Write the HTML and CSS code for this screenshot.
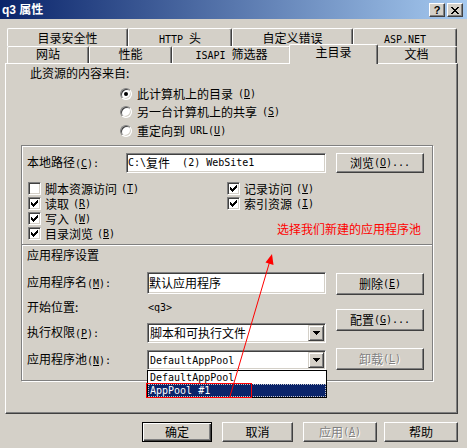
FILE: index.html
```html
<!DOCTYPE html>
<html>
<head>
<meta charset="utf-8">
<title>q3 属性</title>
<link rel="stylesheet" href="styles.css">
</head>
<body>
<div class="win">
  <div class="title">
    <span class="title-text">q3 属性</span>
    <div class="caps">
      <span class="cap cap-help">?</span>
      <span class="cap"><svg width="8" height="7" viewBox="0 0 8 7"><path d="M0 0h2v1h-2zM6 0h2v1h-2zM1 1h2v1h-2zM5 1h2v1h-2zM2 2h4v1h-4zM3 3h2v1h-2zM2 4h4v1h-4zM1 5h2v1h-2zM5 5h2v1h-2zM0 6h2v1h-2zM6 6h2v1h-2z" fill="#000"/></svg></span>
    </div>
  </div>

  <div class="tabs">
    <div class="tabrow back">
      <div class="tab t121">目录安全性</div>
      <div class="tab t104"><span class="m">HTTP </span>头</div>
      <div class="tab t121">自定义错误</div>
      <div class="tab t104"><span class="m">ASP.NET</span></div>
    </div>
    <div class="tabrow front">
      <div class="tab t82">网站</div>
      <div class="tab t83">性能</div>
      <div class="tab t119"><span class="m">ISAPI </span>筛选器</div>
      <div class="tab t85 active">主目录</div>
      <div class="tab t81">文档</div>
    </div>
  </div>

  <div class="panel">
    <div class="src">此资源的内容来自:</div>
    <div class="radios">
      <div class="radio"><span class="rb on"></span>此计算机上的目录<span class="m">(<u>D</u>)</span></div>
      <div class="radio"><span class="rb"></span>另一台计算机上的共享<span class="m">(<u>S</u>)</span></div>
      <div class="radio"><span class="rb"></span>重定向到 <span class="m">URL(<u>U</u>)</span></div>
    </div>

    <div class="group">
      <div class="pathrow">
        <div class="lbl lbl-path">本地路径<span class="m">(<u>C</u>):</span></div>
        <div class="edit edit-path"><span class="m">C:\</span>复件<span class="m">&nbsp;&nbsp;(2) WebSite1</span></div>
        <div class="btn btn-side">浏览<span class="m">(<u>O</u>)...</span></div>
      </div>

      <div class="checks">
        <div class="chk"><span class="cb"></span>脚本资源访问<span class="m">(<u>T</u>)</span></div>
        <div class="chk"><span class="cb"><svg width="7" height="7" viewBox="0 0 7 7"><path d="M6 0h1v1h-1zM5 1h2v1h-2zM0 2h1v1h-1zM4 2h3v1h-3zM0 3h2v1h-2zM3 3h3v1h-3zM0 4h5v1h-5zM1 5h3v1h-3zM2 6h1v1h-1z" fill="#000"/></svg></span>记录访问<span class="m">(<u>V</u>)</span></div>
        <div class="chk"><span class="cb"><svg width="7" height="7" viewBox="0 0 7 7"><path d="M6 0h1v1h-1zM5 1h2v1h-2zM0 2h1v1h-1zM4 2h3v1h-3zM0 3h2v1h-2zM3 3h3v1h-3zM0 4h5v1h-5zM1 5h3v1h-3zM2 6h1v1h-1z" fill="#000"/></svg></span>读取<span class="m">(<u>R</u>)</span></div>
        <div class="chk"><span class="cb"><svg width="7" height="7" viewBox="0 0 7 7"><path d="M6 0h1v1h-1zM5 1h2v1h-2zM0 2h1v1h-1zM4 2h3v1h-3zM0 3h2v1h-2zM3 3h3v1h-3zM0 4h5v1h-5zM1 5h3v1h-3zM2 6h1v1h-1z" fill="#000"/></svg></span>索引资源<span class="m">(<u>I</u>)</span></div>
        <div class="chk"><span class="cb"><svg width="7" height="7" viewBox="0 0 7 7"><path d="M6 0h1v1h-1zM5 1h2v1h-2zM0 2h1v1h-1zM4 2h3v1h-3zM0 3h2v1h-2zM3 3h3v1h-3zM0 4h5v1h-5zM1 5h3v1h-3zM2 6h1v1h-1z" fill="#000"/></svg></span>写入<span class="m">(<u>W</u>)</span></div>
        <div class="chk"><span class="cb"><svg width="7" height="7" viewBox="0 0 7 7"><path d="M6 0h1v1h-1zM5 1h2v1h-2zM0 2h1v1h-1zM4 2h3v1h-3zM0 3h2v1h-2zM3 3h3v1h-3zM0 4h5v1h-5zM1 5h3v1h-3zM2 6h1v1h-1z" fill="#000"/></svg></span>目录浏览<span class="m">(<u>B</u>)</span></div>
        <div class="note">选择我们新建的应用程序池</div>
      </div>

      <div class="sep"></div>
      <div class="sub">应用程序设置</div>

      <div class="app">
        <div class="appgrid">
          <div class="lbl">应用程序名<span class="m">(<u>M</u>):</span></div>
          <div class="edit edit-app">默认应用程序</div>

          <div class="lbl">开始位置:</div>
          <div class="plain"><span class="m">&lt;q3&gt;</span></div>

          <div class="lbl">执行权限<span class="m">(<u>P</u>):</span></div>
          <div class="combo">
            <span class="val">脚本和可执行文件</span>
            <span class="dd"><svg width="7" height="4" viewBox="0 0 7 4"><path d="M0 0h7v1h-7zM1 1h5v1h-5zM2 2h3v1h-3zM3 3h1v1h-1z" fill="#000"/></svg></span>
          </div>

          <div class="lbl">应用程序池<span class="m">(<u>N</u>):</span></div>
          <div class="combo">
            <span class="val"><span class="m">DefaultAppPool</span></span>
            <span class="dd"><svg width="7" height="4" viewBox="0 0 7 4"><path d="M0 0h7v1h-7zM1 1h5v1h-5zM2 2h3v1h-3zM3 3h1v1h-1z" fill="#000"/></svg></span>
            <div class="ddlist">
              <div class="it">DefaultAppPool</div>
              <div class="it sel">AppPool #1</div>
              <div class="mark"></div>
            </div>
          </div>
        </div>
        <div class="appbtns">
          <div class="btn btn-side b1">删除<span class="m">(<u>E</u>)</span></div>
          <div class="btn btn-side b2">配置<span class="m">(<u>G</u>)...</span></div>
          <div class="btn btn-side b3 dis">卸载<span class="m">(<u>L</u>)</span></div>
        </div>
      </div>
    </div>
  </div>

  <div class="footer">
    <div class="btn def fb1">确定</div>
    <div class="btn fb2">取消</div>
    <div class="btn dis fb3">应用<span class="m">(<u>A</u>)</span></div>
    <div class="btn fb4">帮助</div>
  </div>

  <svg class="anno" width="467" height="448" viewBox="0 0 467 448">
    <line x1="229.5" y1="398" x2="269.6" y2="262" stroke="#f00" stroke-width="1"/>
    <polygon points="272,254 273.5,265 265.5,262.6" fill="#f00"/>
  </svg>
</div>
</body>
</html>
```

FILE: styles.css
```css
* { box-sizing: border-box; }
html, body { margin: 0; padding: 0; }
body {
  width: 467px;
  height: 448px;
  overflow: hidden;
  background: #d4d0c8;
  font-family: "Noto Sans CJK SC", sans-serif;
  font-size: 12px;
  line-height: 14px;
  color: #000;
}
.m { font-family: "DejaVu Sans Mono", "Liberation Mono", monospace; font-size: 10px; }
u { text-decoration: underline; text-underline-offset: 1px; }

.win { position: relative; width: 467px; height: 448px; background: #d4d0c8; }

/* title bar */
.title {
  height: 19px;
  padding: 1px 4px 0 2px;
  background: linear-gradient(to right, #0a246a, #a6caf0);
  display: flex;
  align-items: center;
  justify-content: space-between;
  color: #fff;
  font-family: "Liberation Sans", "Noto Sans CJK SC", sans-serif;
  font-weight: bold;
  font-size: 12px;
}
.caps { display: flex; gap: 2px; }
.cap {
  width: 16px; height: 14px;
  background: #d4d0c8;
  border: 1px solid; border-color: #fff #404040 #404040 #fff;
  box-shadow: inset -1px -1px #808080;
  display: flex; align-items: center; justify-content: center;
  color: #000;
}
.cap-help { font-family: "Liberation Sans", sans-serif; font-size: 11px; font-weight: bold; line-height: 12px; }

/* tabs */
.tabs { position: relative; z-index: 2; margin: 9px 0 0 7px; width: 450px; }
.tabrow { display: flex; align-items: flex-start; }
.tabrow.back { height: 18px; }
.tabrow.front { height: 17px; }
.tab {
  background: #d4d0c8;
  border-left: 1px solid #fff;
  border-top: 1px solid #fff;
  border-right: 1px solid #404040;
  box-shadow: inset -1px 0 #808080;
  border-radius: 2px 2px 0 0;
  text-align: center;
  line-height: 14px;
  white-space: nowrap;
}
.back .tab { height: 18px; padding-top: 2px; }
.front .tab { height: 17px; }
.tab.active { height: 20px; margin: -2px -2px 0 -2px; position: relative; z-index: 3; }
.t121 { width: 121px; }
.t104 { width: 104px; }
.t82 { width: 82px; }
.t83 { width: 83px; }
.t119 { width: 119px; }
.t85 { width: 89px; }
.t81 { width: 81px; }

/* panel */
.panel {
  margin-left: 5px;
  width: 453px;
  height: 351px;
  border: 1px solid; border-color: #fff #404040 #404040 #fff;
  box-shadow: inset -1px -1px #808080;
  padding-top: 2px;
}
.src { padding-left: 24px; height: 14px; }
.radios { margin-top: 4px; padding-left: 114px; }
.radio { display: flex; align-items: center; height: 19px; gap: 5px; }
.radio:nth-child(2) { height: 18px; }
.rb {
  position: relative;
  flex: none;
  width: 12px; height: 12px;
  border-radius: 50%;
  background: #fff;
  border: 1px solid; border-color: #808080 #fff #fff #808080;
  box-shadow: inset 1px 1px #404040, inset -1px -1px #d4d0c8;
}
.rb.on::after {
  content: "";
  position: absolute; left: 3px; top: 3px;
  width: 4px; height: 4px; border-radius: 50%;
  background: #000;
}

/* group box */
.group {
  margin: 5px 0 0 15px;
  width: 412px;
  height: 236px;
  border: 1px solid #808080;
  box-shadow: inset 1px 1px #fff, 1px 1px #fff;
  padding-left: 5px;
}
.pathrow { display: flex; align-items: center; margin-top: 7px; height: 20px; }
.lbl-path { width: 99px; }
.edit {
  background: #fff;
  border: 1px solid; border-color: #808080 #fff #fff #808080;
  box-shadow: inset 1px 1px #404040, inset -1px -1px #d4d0c8;
  display: flex; align-items: center;
  white-space: pre;
}
.edit-path { width: 200px; height: 20px; padding-left: 1px; }
.btn {
  background: #d4d0c8;
  border: 1px solid; border-color: #fff #404040 #404040 #fff;
  box-shadow: inset -1px -1px #808080;
  display: flex; align-items: center; justify-content: center;
  white-space: nowrap;
}
.btn-side { margin-left: 10px; width: 88px; height: 20px; }
.btn.dis { color: #808080; text-shadow: 1px 1px #fff; }
.btn.def {
  border: 1px solid #000;
  box-shadow: inset 1px 1px #fff, inset -1px -1px #404040, inset -2px -2px #808080;
}

.checks {
  margin-top: 8px;
  padding-left: 1px;
  display: grid;
  grid-template-columns: 199px 1fr;
  grid-template-rows: repeat(4, 15px);
  line-height: 13px;
}
.chk { display: flex; align-items: center; gap: 4px; white-space: nowrap; }
.cb {
  flex: none;
  width: 13px; height: 13px;
  background: #fff;
  border: 1px solid; border-color: #808080 #fff #fff #808080;
  box-shadow: inset 1px 1px #404040, inset -1px -1px #d4d0c8;
  display: flex; align-items: center; justify-content: center;
}
.note {
  grid-column: 2;
  grid-row: 3 / span 2;
  align-self: center;
  margin: 4px 0 0 50px;
  color: #f00;
  white-space: nowrap;
}
.sep {
  margin: 3px 0 0 -5px;
  height: 2px;
  border-top: 1px solid #808080;
  border-bottom: 1px solid #fff;
}
.sub { margin-top: 2px; height: 14px; }

.app { display: flex; margin-top: 9px; }
.appgrid {
  display: grid;
  grid-template-columns: 120px 179px;
  grid-template-rows: 24px 24px 28px 26px;
  align-items: center;
}
.edit-app { height: 22px; padding-left: 1px; }
.plain { padding-left: 1px; }
.combo {
  position: relative;
  height: 20px;
  background: #fff;
  border: 1px solid; border-color: #808080 #fff #fff #808080;
  box-shadow: inset 1px 1px #404040, inset -1px -1px #d4d0c8;
  padding: 1px;
  display: flex; align-items: center;
}
.combo .val { flex: 1; padding-left: 1px; white-space: nowrap; }
.combo .dd {
  flex: none;
  width: 16px; height: 16px;
  background: #d4d0c8;
  border: 1px solid; border-color: #d4d0c8 #404040 #404040 #d4d0c8;
  box-shadow: inset 1px 1px #fff, inset -1px -1px #808080;
  display: flex; align-items: center; justify-content: center;
}
.ddlist {
  position: absolute;
  left: -1px; top: 19px;
  width: 180px;
  background: #fff;
  border: 1px solid #000;
  z-index: 5;
}
.ddlist .it {
  height: 13px;
  line-height: 13px;
  padding-left: 2px;
  font-family: "DejaVu Sans Mono", "Liberation Mono", monospace;
  font-size: 10px;
  white-space: nowrap;
}
.ddlist .it.sel {
  background: #0a246a;
  color: #fff;
  outline: 1px dotted #c8c8c8;
  outline-offset: -1px;
}
.mark {
  position: absolute;
  left: -2px; top: 12px;
  width: 106px; height: 15px;
  border: 1px solid #f00;
}

.appbtns { display: flex; flex-direction: column; }
.appbtns .btn { height: 22px; }
.b1 { margin-top: 2px; }
.b2 { margin-top: 14px; }
.b3 { margin-top: 17px; }

/* dialog buttons */
.footer { display: flex; margin-top: 8px; height: 20px; }
.footer .btn { height: 20px; }
.fb1 { margin-left: 142px; width: 70px; }
.fb2 { margin-left: 10px; width: 71px; }
.fb3 { margin-left: 10px; width: 74px; }
.fb4 { margin-left: 7px; width: 74px; }

/* annotation arrow */
.anno { position: absolute; left: 0; top: 0; pointer-events: none; z-index: 10; }
```
